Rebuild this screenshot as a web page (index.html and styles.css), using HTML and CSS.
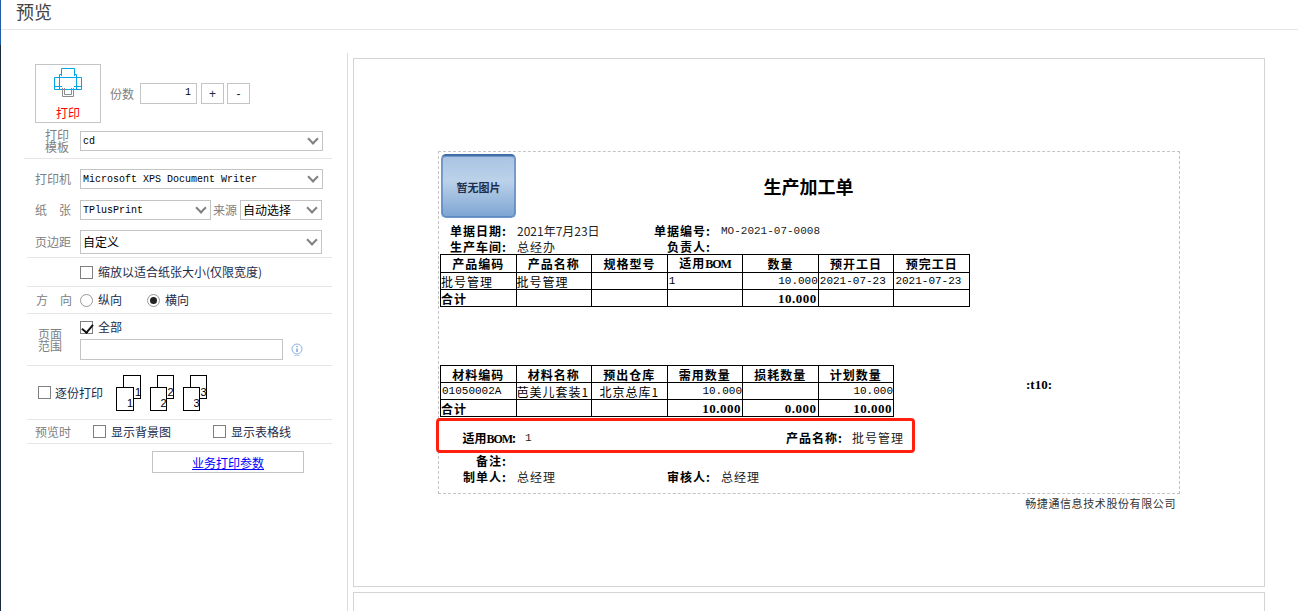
FILE: index.html
```html
<!DOCTYPE html>
<html lang="zh-CN">
  <head>
    <meta charset="UTF-8" />
    <title>预览</title>
    <link rel="stylesheet" href="styles.css">
  </head>
  <body>
    <div class="edge"></div>
    <div class="window">
      <header class="title-bar">预览</header>

      <div class="main">
        <!-- Print settings -->
        <aside class="sidebar">
          <div class="row print-row">
            <button class="print-btn">
              <svg width="30" height="30" viewBox="0 0 30 30" fill="none">
                <path d="M8.5 8V.5H21.5V8M6.5 9V6.5H8.5M21.5 6.5H23.5V9" stroke="#00a6e6" />
                <path d="M1.5 9.5H28.5V21.5H1.5ZM6.5 9.5V21.5M23.5 9.5V21.5M1.5 18.5H9M21 18.5H28.5" stroke="#00a6e6" />
                <path d="M9.5 20V28.5H20.5V20M11.5 20V26.5H18.5V20" stroke="#8c8c8c" />
              </svg>
              <span>打印</span>
            </button>
            <span class="copies-label">份数</span>
            <input class="copies" type="text" value="1" />
            <button class="step">+</button>
            <button class="step">-</button>
          </div>

          <div class="row template-row divider">
            <span class="label stacked">打印<br />模板</span>
            <div class="select-wrap w-full"><select class="mono-select"><option>cd</option></select></div>
          </div>

          <div class="row printer-row">
            <span class="label">打印机</span>
            <div class="select-wrap w-full"><select class="mono-select"><option>Microsoft XPS Document Writer</option></select></div>
          </div>

          <div class="row paper-row">
            <span class="label spaced">纸张</span>
            <div class="select-wrap w-paper"><select class="mono-select"><option>TPlusPrint</option></select></div>
            <span class="source-label">来源</span>
            <div class="select-wrap w-source"><select><option>自动选择</option></select></div>
          </div>

          <div class="row margin-row divider">
            <span class="label">页边距</span>
            <div class="select-wrap w-margin"><select><option>自定义</option></select></div>
          </div>

          <div class="row fit-row divider">
            <label class="option"><input type="checkbox" class="box" />缩放以适合纸张大小(仅限宽度)</label>
          </div>

          <div class="row orient-row divider">
            <span class="label spaced">方向</span>
            <label class="option portrait"><input type="radio" name="orient" class="radio" />纵向</label>
            <label class="option"><input type="radio" name="orient" class="radio" checked />横向</label>
          </div>

          <div class="row range-row divider">
            <span class="label stacked range-label">页面<br />范围</span>
            <div class="range-fields">
              <label class="option"><input type="checkbox" class="box" checked />全部</label>
              <div class="range-input">
                <input type="text" class="pages" />
                <svg width="12" height="13" viewBox="0 0 12 13" fill="none">
                  <circle cx="6" cy="6" r="5" stroke="#8ab4e0" />
                  <path d="M6 3v1M6 5.5V9" stroke="#3b78c0" />
                  <path d="M3 12.5H9" stroke="#c4d8ee" />
                </svg>
              </div>
            </div>
          </div>

          <div class="row collate-row divider">
            <label class="option"><input type="checkbox" class="box" />逐份打印</label>
            <div class="collate-icons">
              <svg width="26" height="36" viewBox="0 0 26 36" fill="#fff" stroke="#000">
                <rect x="7.5" y="0.5" width="17" height="23" />
                <rect x="0.5" y="12.5" width="17" height="23" />
                <text x="19" y="21" class="copy-num">1</text>
                <text x="11" y="32" class="copy-num">1</text>
              </svg>
              <svg width="25" height="36" viewBox="0 0 25 36" fill="#fff" stroke="#000">
                <rect x="7.5" y="0.5" width="16" height="23" />
                <rect x="0.5" y="12.5" width="16" height="23" />
                <text x="17.5" y="21" class="copy-num">2</text>
                <text x="10.5" y="32" class="copy-num">2</text>
              </svg>
              <svg width="25" height="36" viewBox="0 0 25 36" fill="#fff" stroke="#000">
                <rect x="7.5" y="0.5" width="16" height="23" />
                <rect x="0.5" y="12.5" width="16" height="23" />
                <text x="17.5" y="21" class="copy-num">3</text>
                <text x="10.5" y="32" class="copy-num">3</text>
              </svg>
            </div>
          </div>

          <div class="row view-row divider">
            <span class="label view-label">预览时</span>
            <label class="option view-bg"><input type="checkbox" class="box" />显示背景图</label>
            <label class="option"><input type="checkbox" class="box" />显示表格线</label>
          </div>

          <button class="params-btn">业务打印参数</button>
        </aside>

        <!-- Print preview -->
        <section class="preview">
          <div class="sheet">
            <div class="report">
              <div class="report-head">
                <div class="no-image">暂无图片</div>
                <h1>生产加工单</h1>
              </div>

              <div class="info-row">
                <b>单据日期:</b><span class="date">2021年7月23日</span>
                <b>单据编号:</b><span class="num">MO-2021-07-0008</span>
              </div>
              <div class="info-row">
                <b>生产车间:</b><span>总经办</span>
                <b>负责人:</b><span></span>
              </div>

              <table class="grid-table wide">
                <tr>
                  <th>产品编码</th><th>产品名称</th><th>规格型号</th><th>适用<em>BOM</em></th>
                  <th>数量</th><th>预开工日</th><th>预完工日</th>
                </tr>
                <tr>
                  <td>批号管理</td><td>批号管理</td><td></td><td class="num">1</td>
                  <td class="num right">10.000</td><td class="num">2021-07-23</td><td class="num">2021-07-23</td>
                </tr>
                <tr>
                  <td><b>合计</b></td><td></td><td></td><td></td>
                  <td class="total">10.000</td><td></td><td></td>
                </tr>
              </table>

              <div class="materials">
                <table class="grid-table">
                  <tr>
                    <th>材料编码</th><th>材料名称</th><th>预出仓库</th>
                    <th>需用数量</th><th>损耗数量</th><th>计划数量</th>
                  </tr>
                  <tr>
                    <td class="num">01050002A</td><td>芭美儿套装1</td><td class="center">北京总库1</td>
                    <td class="num right">10.000</td><td></td><td class="num right">10.000</td>
                  </tr>
                  <tr>
                    <td><b>合计</b></td><td></td><td></td>
                    <td class="total">10.000</td><td class="total">0.000</td><td class="total">10.000</td>
                  </tr>
                </table>
                <span class="stray">:t10:</span>
              </div>

              <div class="bom-row">
                <b>适用<em>BOM</em>:</b><span class="num">1</span>
                <b>产品名称:</b><span>批号管理</span>
                <div class="highlight"></div>
              </div>

              <div class="info-row notes">
                <b>备注:</b><span></span>
                <b></b><span></span>
              </div>
              <div class="info-row">
                <b>制单人:</b><span>总经理</span>
                <b>审核人:</b><span>总经理</span>
              </div>
            </div>
            <div class="company">畅捷通信息技术股份有限公司</div>
          </div>
          <div class="sheet"></div>
        </section>
      </div>
    </div>
  </body>
</html>
```

FILE: styles.css
```css
:root {
  --line: #e6e6e6;
  --field: #c4c4c4;
  --label: #808080;
  --navy: #1b2b4b;
  --cjk: "Noto Sans CJK SC", sans-serif;
}

* {
  margin: 0;
  padding: 0;
  box-sizing: border-box;
}

html,
body {
  height: 100%;
  overflow: hidden;
}

body {
  display: flex;
  background: #fff;
  font-family: var(--cjk);
  font-size: 12px;
  color: #000;
}

/* Window edge */
.edge {
  width: 1px;
  flex-shrink: 0;
  background: linear-gradient(#1f5da6 45px, #1a2a3a 45px);
}

.window {
  flex: 1;
  min-width: 0;
}

.title-bar {
  height: 30px;
  padding-left: 15px;
  border-bottom: 1px solid var(--line);
  font-size: 18px;
  line-height: 23px;
  color: #444;
}

.main {
  display: flex;
  height: 558px;
  margin-top: 23px;
  overflow: hidden;
}

/* Sidebar */
.sidebar {
  width: 347px;
  flex-shrink: 0;
  padding: 11px 15px 0 23px;
  border-right: 1px solid #dcdcdc;
  line-height: 14px;
}

.row {
  display: flex;
  align-items: center;
  padding-left: 11px;
}

.divider {
  border-bottom: 1px solid var(--line);
}

.label {
  width: 45px;
  flex-shrink: 0;
  color: var(--label);
  white-space: nowrap;
}

.spaced {
  letter-spacing: 12px;
}

.stacked {
  line-height: 12px;
  padding-left: 10px;
}

.print-row {
  height: 59px;
}

.print-btn {
  width: 66px;
  height: 59px;
  display: flex;
  flex-direction: column;
  align-items: center;
  padding-top: 3px;
  border: 1px solid var(--field);
  background: #fff;
  font: 12px/14px var(--cjk);
  color: #f00;
}

.print-btn span {
  margin-top: 8px;
}

.copies-label {
  margin-left: 9px;
  color: var(--label);
}

.copies {
  width: 57px;
  height: 21px;
  margin-left: 6px;
  padding-right: 5px;
  padding-bottom: 3px;
  border: 1px solid var(--field);
  font: 10px "Liberation Mono", monospace;
  text-align: right;
}

.step {
  width: 23px;
  height: 21px;
  margin-left: 3px;
  border: 1px solid var(--field);
  background: #fff;
  color: var(--navy);
  font: 12px "Liberation Sans", sans-serif;
}

.copies + .step {
  margin-left: 4px;
}

.select-wrap {
  position: relative;
  flex-shrink: 0;
  height: 20px;
}

.select-wrap::after {
  content: "";
  position: absolute;
  right: 6px;
  top: 4px;
  width: 6px;
  height: 6px;
  border-right: 2px solid #808080;
  border-bottom: 2px solid #808080;
  transform: rotate(45deg);
}

.select-wrap select {
  width: 100%;
  height: 100%;
  appearance: none;
  padding-left: 2px;
  border: 1px solid var(--field);
  border-radius: 0;
  background: #fff;
  font: 12px var(--cjk);
  color: #000;
}

.select-wrap .mono-select {
  font: 10px "Liberation Mono", monospace;
}

.w-full {
  width: 243px;
}

.w-paper {
  width: 131px;
}

.w-source {
  width: 82px;
  margin-top: -1px;
}

.w-margin {
  width: 242px;
  height: 24px;
}

.w-margin::after {
  top: 6px;
}

.template-row {
  height: 32px;
  margin-top: 4px;
  padding-bottom: 3px;
}

.printer-row {
  margin-top: 10px;
}

.paper-row {
  margin-top: 11px;
}

.source-label {
  width: 29px;
  padding-left: 2px;
  color: var(--label);
}

.margin-row {
  height: 28px;
  margin-top: 10px;
  margin-left: 3px;
  padding-left: 8px;
  padding-bottom: 4px;
}

.fit-row {
  height: 29px;
  margin-left: 3px;
  padding-left: 53px;
}

.orient-row {
  height: 27px;
  margin-left: 3px;
  padding-left: 9px;
}

.orient-row .label {
  width: 44px;
}

.option {
  display: flex;
  align-items: center;
  color: var(--navy);
  white-space: nowrap;
}

.portrait {
  width: 67px;
}

.box,
.radio {
  appearance: none;
  width: 13px;
  height: 13px;
  flex-shrink: 0;
  margin-right: 5px;
  border: 1px solid #808080;
  background: #fff;
}

.box:checked::after {
  content: "";
  display: block;
  width: 5px;
  height: 9px;
  margin: 0 0 0 3px;
  border-right: 2px solid #111;
  border-bottom: 2px solid #111;
  transform: rotate(40deg);
}

.radio {
  border-radius: 50%;
  border-color: #999;
}

.radio:checked::after {
  content: "";
  display: block;
  width: 7px;
  height: 7px;
  margin: 2px;
  border-radius: 50%;
  background: #222;
}

.range-row {
  height: 52px;
  margin-left: 3px;
  padding-left: 8px;
  padding-top: 1px;
}

.range-label {
  padding-left: 3px;
}

.range-fields {
  display: flex;
  flex-direction: column;
  gap: 5px;
}

.range-input {
  display: flex;
  align-items: center;
  gap: 8px;
}

.pages {
  width: 203px;
  height: 21px;
  border: 1px solid var(--field);
}

.collate-row {
  height: 54px;
  margin-left: 3px;
  padding-left: 11px;
}

.collate-row .box {
  margin-right: 4px;
}

.collate-icons {
  display: flex;
  gap: 8px;
  margin-left: 13px;
}

.copy-num {
  font: 11px "Liberation Sans", sans-serif;
  fill: #000;
  stroke: none;
}

.view-row {
  height: 24px;
  margin-left: 3px;
  padding-left: 8px;
}

.view-label {
  width: 58px;
}

.view-bg {
  width: 120px;
}

.params-btn {
  display: block;
  width: 152px;
  height: 22px;
  margin: 7px 0 0 128px;
  border: 1px solid var(--field);
  background: #fff;
  font: 12px var(--cjk);
  color: #00f;
  text-decoration: underline;
}

/* Preview */
.preview {
  flex: 1;
  display: flex;
  flex-direction: column;
  gap: 5px;
  padding: 5px 33px 0 5px;
}

.sheet {
  height: 529px;
  flex-shrink: 0;
  padding: 92px 0 0 84px;
  border: 1px solid #d4d4d4;
}

.report {
  width: 742px;
  height: 343px;
  border: 1px dashed #c4c4c4;
  font-size: 12px;
  line-height: 16px;
  letter-spacing: 1px;
}

.report b {
  font-weight: 700;
}

.report em {
  font: 700 12px "Liberation Serif", serif;
  letter-spacing: -1px;
}

.num {
  font-family: "Liberation Mono", monospace;
  font-size: 11px;
  letter-spacing: 0;
}

.report-head {
  display: grid;
  grid-template-columns: 1fr auto 1fr;
  align-items: center;
  height: 71px;
  padding: 2px 0 5px 2px;
}

.report-head h1 {
  margin-left: -3px;
  font-size: 18px;
  line-height: 24px;
  letter-spacing: 0;
  font-weight: 700;
}

.no-image {
  width: 75px;
  height: 64px;
  display: flex;
  align-items: center;
  justify-content: center;
  border: 1px solid #6f9acb;
  border-top: 2px solid #3f6ea8;
  border-radius: 5px;
  background: linear-gradient(#a8c3e2, #bcd2ea 40%, #7ea5d3);
  box-shadow: inset 0 0 0 1px rgba(60, 110, 175, 0.5);
  font-size: 11px;
  font-weight: 700;
  letter-spacing: 0;
  color: #1e2f4f;
}

.info-row {
  display: grid;
  grid-template-columns: 68px 126px 78px auto;
  height: 16px;
}

.info-row b,
.bom-row b {
  text-align: right;
  white-space: nowrap;
}

.info-row span,
.bom-row span {
  padding-left: 10px;
  white-space: nowrap;
  color: #222;
}

.info-row .date {
  letter-spacing: 0;
}

.grid-table {
  margin-left: 1px;
  border-collapse: collapse;
  table-layout: fixed;
  width: 454px;
}

.grid-table.wide {
  width: 530px;
  margin-top: -1px;
}

.grid-table th,
.grid-table td {
  height: 17px;
  border: 1px solid #000;
  font-size: 12px;
  line-height: 15px;
  overflow: hidden;
  white-space: nowrap;
}

.grid-table td.num {
  font-size: 11px;
  padding-left: 1px;
}

.grid-table td.right {
  text-align: right;
}

.grid-table .center {
  text-align: center;
}

.grid-table .total {
  font: 700 13px/15px "Liberation Serif", serif;
  letter-spacing: 0.5px;
  text-align: right;
  padding-right: 1px;
}

.materials {
  display: flex;
  align-items: flex-start;
  margin-top: 58px;
}

.stray {
  margin: 12px 0 0 132px;
  font: 700 13px "Liberation Serif", serif;
  letter-spacing: 0;
}

.bom-row {
  position: relative;
  display: grid;
  grid-template-columns: 77px 249px 78px auto;
  height: 16px;
  padding-top: 1px;
  margin-top: 12px;
}

.bom-row b:first-child {
  letter-spacing: 0;
}

.bom-row span {
  padding-left: 9px;
}

/* Red annotation drawn over the report */
.highlight {
  position: absolute;
  left: -3px;
  top: -11px;
  width: 479px;
  height: 35px;
  border: 3px solid #ff2010;
  border-radius: 4px;
}

.notes {
  margin-top: 8px;
}

.company {
  width: 738px;
  margin-top: 1px;
  text-align: right;
  font-size: 11px;
  line-height: 16px;
  letter-spacing: 0.6px;
  color: #333;
}
```
